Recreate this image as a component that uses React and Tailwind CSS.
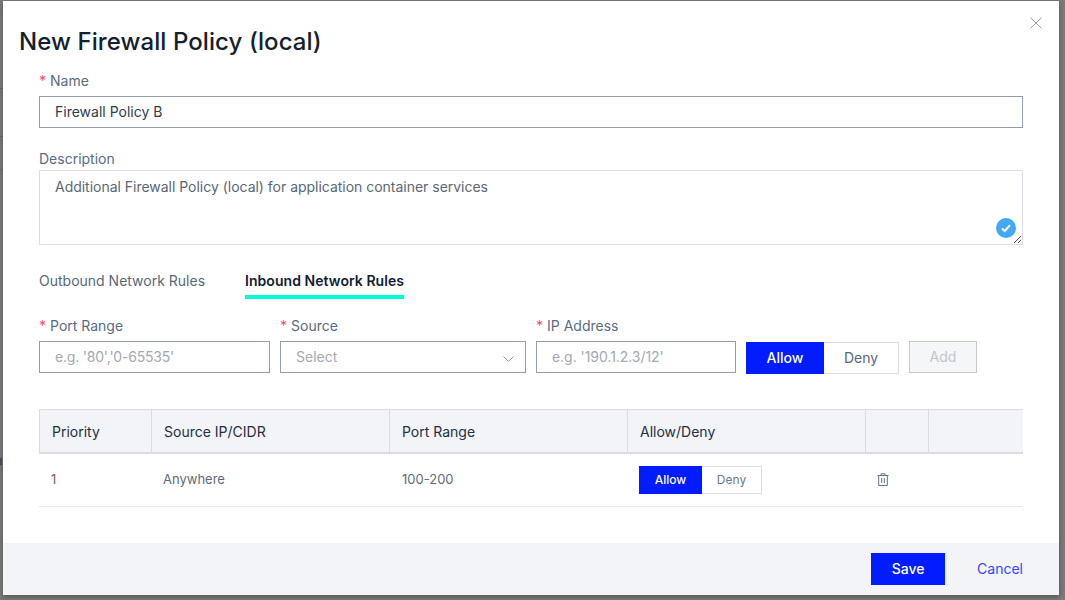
import React from "react";

function Label({ children, required, className = "" }) {
  return (
    <div className={`h-[21px] text-[14px] leading-[21px] text-[#5b6b7f] ${className}`}>
      {required && <span className="text-[#ff4d6d] mr-[4px]">*</span>}
      {children}
    </div>
  );
}

function Trash() {
  return (
    <svg width="12" height="13" viewBox="0 0 12 13" fill="none" stroke="#5f7388" strokeWidth="1">
      <path d="M0.5 2.5H11.5" />
      <path d="M4 2.5V0.8H8V2.5" />
      <path d="M1.7 2.5V12.5H10.3V2.5" />
      <path d="M4.7 5V10M7.3 5V10" />
    </svg>
  );
}

const th = "font-normal pl-[12px] border-t border-b-[2px] border-l border-[#dcdde2]";

export default function App() {
  return (
    <div className="relative w-[1065px] h-[600px] overflow-hidden bg-[#7c7c7c] font-['Inter',sans-serif] pl-[3px] pt-[1px]">
      <div className="absolute left-0 top-[88px] w-[3px] h-px bg-[#6e6e6e]" />
      <div className="absolute left-0 top-[136px] w-[3px] h-px bg-[#6e6e6e]" />
      <div className="absolute left-0 top-[169px] w-[3px] h-px bg-[#6e6e6e]" />
      <div className="absolute left-0 top-[458px] w-[2px] h-[7px] bg-[#4a5560]" />
      <div className="relative w-[1056px] h-[594px] bg-white flex flex-col shadow-[0_2px_6px_rgba(0,0,0,0.35)]">
        <svg className="absolute right-[17px] top-[16px]" width="12" height="12" viewBox="0 0 12 12" stroke="#939eab" strokeWidth="1" fill="none">
          <path d="M0.5 0.5L11.5 11.5M11.5 0.5L0.5 11.5" />
        </svg>
        <h1 className="ml-[16px] mt-[26px] h-[30px] text-[24px] leading-[30px] font-medium tracking-[0.08px] text-[#12202f]">
          New Firewall Policy (local)
        </h1>
        <div className="flex-1 pl-[36px] pr-[36px] pt-[13px]">
          <Label required>Name</Label>
          <div className="mt-[5px] h-[32px] border border-[#939dab] pl-[15px] pb-[2px] flex items-center text-[14px] text-[#2f3d4d]">
            Firewall Policy B
          </div>
          <Label className="mt-[20px]">Description</Label>
          <div className="relative mt-[1px] h-[75px] border border-[#dcdde6] pl-[15px] pt-[5px] text-[14px] leading-[21px] tracking-[-0.02px] text-[#5b6776]">
            Additional Firewall Policy (local) for application container services
            <div className="absolute right-[6px] bottom-[6px] w-[20px] h-[20px] rounded-full bg-[#44a7f8] flex items-center justify-center">
              <svg width="10" height="9" viewBox="0 0 10 9" fill="none" stroke="#ffffff" strokeWidth="2">
                <path d="M1 4.5L3.8 7L9 1.2" />
              </svg>
            </div>
            <svg className="absolute right-0 bottom-0" width="9" height="9" viewBox="0 0 9 9" stroke="#555555" strokeWidth="1">
              <path d="M1 8L8 1M5 8L8 5" />
            </svg>
          </div>

          <div className="mt-[25px] flex h-[29px] text-[14px] leading-[21px]">
            <div className="text-[#5b6776]">Outbound Network Rules</div>
            <div className="ml-[40px] h-[29px] border-b-[4px] border-[#00fbd9] font-semibold tracking-[0.05px] text-[#12202f]">
              Inbound Network Rules
            </div>
          </div>

          <div className="mt-[16px] flex">
            <div className="w-[231px]">
              <Label required>Port Range</Label>
              <div className="mt-[5px] h-[32px] border border-[#939dab] pl-[15px] pb-[2px] flex items-center text-[14px] tracking-[-0.2px] text-[#a3a9b3]">
                e.g. '80','0-65535'
              </div>
            </div>
            <div className="w-[246px] ml-[10px]">
              <Label required>Source</Label>
              <div className="mt-[5px] h-[32px] border border-[#939dab] pl-[15px] pr-[11px] pb-[2px] flex items-center justify-between text-[14px] text-[#a3a9b3]">
                Select
                <svg className="mt-[5px]" width="11" height="6" viewBox="0 0 11 6" fill="none" stroke="#8d96a3" strokeWidth="1">
                  <path d="M0.5 0.5L5.5 5.5L10.5 0.5" />
                </svg>
              </div>
            </div>
            <div className="w-[200px] ml-[10px]">
              <Label required>IP Address</Label>
              <div className="mt-[5px] h-[32px] border border-[#939dab] pl-[15px] pb-[2px] flex items-center text-[14px] tracking-[-0.05px] text-[#a3a9b3]">
                e.g. '190.1.2.3/12'
              </div>
            </div>
            <div className="ml-[10px] mt-[27px] flex h-[32px] text-[14px]">
              <div className="w-[78px] bg-[#001cff] text-white font-medium pb-[2px] flex items-center justify-center">Allow</div>
              <div className="w-[75px] border border-l-0 border-[#dcdde6] text-[#5b6776] pb-[2px] flex items-center justify-center">Deny</div>
            </div>
            <div className="ml-[10px] mt-[26px] w-[68px] h-[32px] border border-[#c5cad1] bg-[#f5f6f8] text-[#c1c6cd] text-[14px] pb-[1px] flex items-center justify-center">
              Add
            </div>
          </div>

          <table className="mt-[35px] w-[984px] table-fixed border-separate border-spacing-0 text-left">
            <colgroup>
              <col className="w-[112px]" />
              <col className="w-[238px]" />
              <col className="w-[238px]" />
              <col className="w-[238px]" />
              <col className="w-[63px]" />
              <col className="w-[95px]" />
            </colgroup>
            <thead>
              <tr className="h-[45px] bg-[#f3f4f8] text-[14px] font-normal text-[#23303f]">
                <th className={th}>Priority</th>
                <th className={th}>Source IP/CIDR</th>
                <th className={th}>Port Range</th>
                <th className={th}>Allow/Deny</th>
                <th className={th} />
                <th className={th} />
              </tr>
            </thead>
            <tbody>
              <tr className="h-[53px] text-[13px] text-[#5f6b7a]">
                <td className="pl-[12px] border-b border-[#e8e9ee] text-[#8a5a5a]">1</td>
                <td className="pl-[12px] border-b border-[#e8e9ee]">Anywhere</td>
                <td className="pl-[13px] border-b border-[#e8e9ee]">100-200</td>
                <td className="pl-[12px] border-b border-[#e8e9ee]">
                  <div className="flex h-[28px] w-[123px] text-[12px]">
                    <div className="w-[63px] bg-[#001cff] text-white font-medium pb-[1px] flex items-center justify-center">Allow</div>
                    <div className="w-[60px] border border-l-0 border-[#dcdde6] text-[#6f7a88] pb-[1px] flex items-center justify-center">Deny</div>
                  </div>
                </td>
                <td className="pl-[12px] pb-[2px] border-b border-[#e8e9ee]">
                  <div className="flex items-center"><Trash /></div>
                </td>
                <td className="border-b border-[#e8e9ee]" />
              </tr>
            </tbody>
          </table>
        </div>
        <div className="h-[52px] bg-[#f3f4f8] flex items-center justify-end pr-[36px] text-[14px]">
          <div className="w-[74px] h-[32px] bg-[#001cff] text-white font-medium pb-[2px] flex items-center justify-center">Save</div>
          <div className="ml-[32px] pb-[2px] text-[#2f49ff]">Cancel</div>
        </div>
      </div>
    </div>
  );
}
